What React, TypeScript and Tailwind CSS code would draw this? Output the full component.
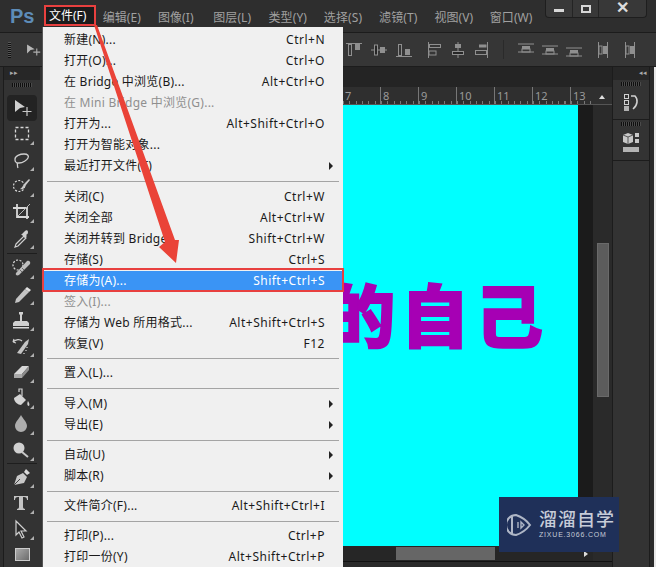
import React from 'react';

const menuBar = ['编辑(E)', '图像(I)', '图层(L)', '类型(Y)', '选择(S)', '滤镜(T)', '视图(V)', '窗口(W)'];

type MenuRow = { label?: string; keys?: string; disabled?: boolean; sub?: boolean; active?: boolean; sep?: number };

const menuRows: MenuRow[] = [
  { label: '新建(N)...', keys: 'Ctrl+N' },
  { label: '打开(O)...', keys: 'Ctrl+O' },
  { label: '在 Bridge 中浏览(B)...', keys: 'Alt+Ctrl+O' },
  { label: '在 Mini Bridge 中浏览(G)...', disabled: true },
  { label: '打开为...', keys: 'Alt+Shift+Ctrl+O' },
  { label: '打开为智能对象...' },
  { label: '最近打开文件(T)', sub: true },
  { sep: 10 },
  { label: '关闭(C)', keys: 'Ctrl+W' },
  { label: '关闭全部', keys: 'Alt+Ctrl+W' },
  { label: '关闭并转到 Bridge...', keys: 'Shift+Ctrl+W' },
  { label: '存储(S)', keys: 'Ctrl+S' },
  { label: '存储为(A)...', keys: 'Shift+Ctrl+S', active: true },
  { label: '签入(I)...', disabled: true },
  { label: '存储为 Web 所用格式...', keys: 'Alt+Shift+Ctrl+S' },
  { label: '恢复(V)', keys: 'F12' },
  { sep: 8 },
  { label: '置入(L)...' },
  { sep: 10 },
  { label: '导入(M)', sub: true },
  { label: '导出(E)', sub: true },
  { sep: 9 },
  { label: '自动(U)', sub: true },
  { label: '脚本(R)', sub: true },
  { sep: 9 },
  { label: '文件简介(F)...', keys: 'Alt+Shift+Ctrl+I' },
  { sep: 9 },
  { label: '打印(P)...', keys: 'Ctrl+P' },
  { label: '打印一份(Y)', keys: 'Alt+Shift+Ctrl+P' },
];

// each tool is drawn on a 26x26 box, corner triangle comes from Tool
const tools: { key: string; group?: string; active?: boolean; noCorner?: boolean; draw: React.ReactNode }[] = [
  {
    key: 'move',
    active: true,
    noCorner: true,
    draw: (
      <>
        <path d="M6 5l10 7-5 1-5 4z" fill="#d0d0d0" />
        <path d="M18 12v9M13.500 16.500h9" stroke="#c8c8c8" strokeWidth="1.2" fill="none" />
      </>
    ),
  },
  { key: 'marquee', draw: <rect x="6.500" y="6.500" width="13" height="12" fill="none" stroke="#d8d8d8" strokeWidth="1.3" strokeDasharray="3 2" /> },
  {
    key: 'lasso',
    draw: (
      <path d="M6 12c0-3 5-5 9-5s5 2 4 4-5 5-9 5-4-2-4-4zM8 16c1 2 0 3 1 5" fill="none" stroke="#d0d0d0" strokeWidth="1.3" />
    ),
  },
  {
    key: 'quick',
    draw: (
      <>
        <circle cx="10" cy="13" r="5.500" fill="none" stroke="#d8d8d8" strokeWidth="1.2" strokeDasharray="2 1.5" />
        <path d="M11 16c2-1 3-4 5-6l4-4 1 1-4 5c-1 3-3 5-6 4z" fill="#c8c8c8" />
      </>
    ),
  },
  {
    key: 'crop',
    draw: (
      <>
        <path d="M4 9h14v11M8 5v13h12" fill="none" stroke="#d8d8d8" strokeWidth="1.8" />
        <path d="M9 17L21 5" stroke="#b8b8b8" strokeWidth="1" />
      </>
    ),
  },
  {
    key: 'dropper',
    draw: (
      <>
        <path d="M7 19l8-8 2 2-8 8-3 1z" fill="none" stroke="#d0d0d0" strokeWidth="1.2" />
        <path d="M13 9l3-3c1-1 3-1 3 1s-1 2-2 3l1 1-2 2-4-4z" fill="#d0d0d0" />
      </>
    ),
  },
  {
    key: 'heal',
    group: 'my-[1.5px]',
    draw: (
      <>
        <circle cx="9" cy="10" r="5" fill="none" stroke="#d8d8d8" strokeWidth="1.2" strokeDasharray="2 1.5" />
        <path d="M7 18L18 6c2-1 4 1 3 3L10 20c-2 1-4 0-3-2z" fill="#bdbdbd" />
        <path d="M11 15l2 2M13 13l2 2" stroke="#6a6a6a" strokeWidth="1" />
      </>
    ),
  },
  {
    key: 'pencil',
    draw: (
      <>
        <path d="M7 18L16 8l4 3-10 10-4 1z" fill="#c4c4c4" />
        <path d="M16 8l2-2 4 3-2 2z" fill="#e0e0e0" />
      </>
    ),
  },
  {
    key: 'stamp',
    draw: (
      <>
        <path d="M10 5h4v2l-1 1v6h5l2 2v3H4v-3l2-2h5V8l-1-1z" fill="#d0d0d0" />
        <rect x="4" y="20" width="16" height="1.5" fill="#d8d8d8" />
      </>
    ),
  },
  {
    key: 'history',
    draw: (
      <>
        <path d="M8 20l8-11 4-3-1 5-7 10z" fill="#c4c4c4" />
        <path d="M4 9c3-3 7-3 9-1M4 9l1-3M4 9l3 1" fill="none" stroke="#d0d0d0" strokeWidth="1.2" />
        <path d="M18 14v1M17 17v1M15 20v1" stroke="#d8d8d8" strokeWidth="1.2" />
      </>
    ),
  },
  {
    key: 'eraser',
    draw: (
      <>
        <path d="M5 15l8-8h7l-7 8z" fill="#d8d8d8" />
        <path d="M5 15h8v4H5z" fill="#a8a8a8" />
        <path d="M13 15l7-8v4l-7 8z" fill="#8c8c8c" />
      </>
    ),
  },
  {
    key: 'bucket',
    draw: (
      <>
        <path d="M10 7V4h3v7" fill="none" stroke="#d0d0d0" strokeWidth="1.2" />
        <path d="M5 13l6-4 6 6-5 5c-3 0-7-3-7-7z" fill="#d4d4d4" />
        <path d="M19 16c1 2 2 3 1 5-2 0-2-3-1-5z" fill="#d4d4d4" />
      </>
    ),
  },
  { key: 'blur', draw: <path d="M12 4c2 4 6 7 6 11a6 6 0 01-12 0c0-4 4-7 6-11z" fill="#aeaeae" /> },
  {
    key: 'dodge',
    draw: (
      <>
        <circle cx="10" cy="11" r="5.500" fill="#d0d0d0" />
        <path d="M13 15l6 5" stroke="#c8c8c8" strokeWidth="2" />
      </>
    ),
  },
  {
    key: 'pen',
    group: '',
    draw: (
      <>
        <path d="M5 21l3-9 6-3 4 4-3 6z" fill="#c8c8c8" />
        <path d="M5 21l6-6" stroke="#444" strokeWidth="1" />
        <path d="M15 8l2-3 4 4-3 2z" fill="#dadada" />
      </>
    ),
  },
  {
    key: 'type',
    draw: <path d="M5 6h14v4h-1c0-2-1-3-3-3h-1v10c0 1 1 2 2 2v1H8v-1c1 0 2-1 2-2V7H9c-2 0-3 1-3 3H5z" fill="#c4c4c4" />,
  },
  { key: 'path', draw: <path d="M7 5v14l3-3 3 6 2-1-3-6h5z" fill="#2b2b2b" stroke="#d0d0d0" strokeWidth="1.2" /> },
];

const alignBars = ['top', 'mid', 'bottom', 'left', 'center', 'right'];

const AlignIcon = ({ bar }: { bar: string }) => (
  <svg width="18" height="18" viewBox="0 0 18 18" fill="none" stroke="#8f8f8f">
    {bar === 'top' && (
      <>
        <path d="M1 2.500h16" />
        <rect x="3.500" y="3.500" width="3" height="11" />
        <rect x="10" y="3" width="5" height="6" fill="#8f8f8f" stroke="none" />
      </>
    )}
    {bar === 'mid' && (
      <>
        <path d="M1 9h16" />
        <rect x="4.500" y="4" width="3" height="10" fill="#262626" />
        <rect x="10" y="6" width="5" height="6" fill="#8f8f8f" stroke="none" />
      </>
    )}
    {bar === 'bottom' && (
      <>
        <path d="M1 15.500h16" />
        <rect x="3.500" y="3.500" width="3" height="11" />
        <rect x="10" y="8" width="5" height="6" fill="#8f8f8f" stroke="none" />
      </>
    )}
    {bar === 'left' && (
      <>
        <path d="M2.500 1v16" />
        <rect x="3.500" y="3.500" width="11" height="3" />
        <rect x="3" y="10" width="7" height="4" fill="none" />
      </>
    )}
    {bar === 'center' && (
      <>
        <path d="M9 1v16" />
        <rect x="6" y="3" width="6" height="4" fill="#8f8f8f" stroke="none" />
        <rect x="3.500" y="10.500" width="11" height="3" fill="#262626" />
      </>
    )}
    {bar === 'right' && (
      <>
        <path d="M15.500 1v16" />
        <rect x="7" y="3.500" width="7.500" height="3" fill="#8f8f8f" stroke="none" />
        <rect x="3.500" y="9.500" width="11" height="4" />
      </>
    )}
  </svg>
);

const DistIcon = ({ y }: { y: number }) => (
  <svg width="18" height="18" viewBox="0 0 18 18" fill="none" stroke="#8f8f8f">
    <path d={`M1 ${y}h16M1 ${y + 8}h16`} />
    <rect x="5" y={y + 2} width="8" height="3" fill="#8f8f8f" stroke="none" />
    <rect x="5" y={y + 5} width="8" height="3" />
  </svg>
);

const VDistIcon = () => (
  <svg width="18" height="18" viewBox="0 0 18 18" fill="none" stroke="#8f8f8f">
    <path d="M4.500 1v16M13.500 1v16" />
    <rect x="5" y="5" width="3" height="8" />
    <rect x="9" y="5" width="4" height="8" fill="#8f8f8f" stroke="none" />
  </svg>
);

const Grip = ({ className }: { className?: string }) => (
  <div className={`h-[4px] bg-[repeating-linear-gradient(90deg,#0e0e0e_0_1px,#4a4a4a_1px_2px)] ${className ?? ''}`}></div>
);

const Tool = ({ active, noCorner, draw }: { active?: boolean; noCorner?: boolean; draw: React.ReactNode }) => (
  <div className={`relative flex justify-center items-center h-[26px] w-[30px] ${active ? 'bg-[#232323] rounded-sm' : ''}`}>
    <svg width="26" height="26" viewBox="0 0 26 26">
      {draw}
      {!noCorner && <path d="M25 20v4h-4z" fill="#b0b0b0" />}
    </svg>
  </div>
);

const Ruler = () => (
  <div className="flex justify-end h-[18px] shrink-0 bg-[#2f2f2f] border-b border-[#555] pr-[19px] text-[11px] leading-[13px] text-[#9a9a9a]">
    {[7, 8, 9, 10, 11, 12, 13].map((n) => (
      <div key={n} className={`relative border-l border-[#777] pl-[2px] pt-[2px] ${n === 13 ? 'w-[23px]' : 'w-[38px]'}`}>
        {n}
        <div className="absolute bottom-0 left-0 right-0 h-[3px] bg-[repeating-linear-gradient(90deg,#777_0_1px,transparent_1px_6.3px)]"></div>
      </div>
    ))}
  </div>
);

export default function App() {
  return (
    <div className="relative w-[656px] h-[567px] overflow-hidden flex flex-col bg-[#2e2e2e] font-['Noto_Sans','Noto_Sans_CJK_SC',sans-serif] text-[12px]">
      {/* title + menu bar */}
      <div className="flex h-[33px] shrink-0 bg-[#2e2e2e] border-b border-[#1c1c1c]">
        <div className="w-[43px] pl-[10px] pt-[2px] text-[20px] leading-[29px] font-bold text-[#5d8cb8] font-['Liberation_Sans',sans-serif]">Ps</div>
        <div className="w-[62px]"></div>
        <div className="flex pt-[10px] text-[#a0a0a0] leading-[16px]">
          {menuBar.map((m) => (
            <span key={m} className="w-[55.3px] tracking-[0.1px] whitespace-nowrap">{m}</span>
          ))}
        </div>
        <div className="ml-auto mr-[9px] flex h-[18px] rounded-b-[4px] border border-t-0 border-[#1e1e1e] bg-[#383838]">
          <div className="flex w-[27px] items-center justify-center border-r border-[#242424]">
            <div className="w-[10px] h-[3px] mt-[3px] bg-[#d8d8d8]"></div>
          </div>
          <div className="flex w-[26px] items-center justify-center border-r border-[#242424]">
            <div className="w-[10px] h-[8px] border-2 border-[#d8d8d8]"></div>
          </div>
          <div className="flex w-[47px] items-center justify-center pb-[2px] text-[16px] leading-none font-bold text-[#dcdcdc] font-['Liberation_Sans',sans-serif]">✕</div>
        </div>
      </div>

      {/* options bar */}
      <div className="flex items-center h-[34px] shrink-0 bg-[#363636] border-b border-[#1c1c1c]">
        <div className="w-[3px] h-[16px] ml-[8px] bg-[repeating-linear-gradient(0deg,#111_0_1px,#555_1px_2px)]"></div>
        <svg className="ml-[14px]" width="18" height="18" viewBox="0 0 26 26">
          <path d="M3 5l11 7-6 1-5 5z" fill="#b8b8b8" />
          <path d="M17 11v10M12 16h10" stroke="#b0b0b0" strokeWidth="1.6" fill="none" />
        </svg>
        <div className="flex ml-[302px] gap-[7px]">
          {alignBars.slice(0, 3).map((b) => (
            <AlignIcon key={b} bar={b} />
          ))}
        </div>
        <div className="flex ml-[13px] gap-[5px]">
          {alignBars.slice(3).map((b) => (
            <AlignIcon key={b} bar={b} />
          ))}
        </div>
        <div className="w-px h-[19px] mx-[13px] bg-[#2a2a2a]"></div>
        <div className="flex gap-[6px]">
          <DistIcon y={3} />
          <DistIcon y={5} />
          <DistIcon y={7} />
        </div>
        <div className="flex ml-[11px] gap-[9px]">
          <VDistIcon />
          <VDistIcon />
        </div>
      </div>

      <div className="flex flex-1 min-h-0">
        {/* tool column */}
        <div className="w-[40px] shrink-0 ml-[3px] flex flex-col items-center border-x border-[#1c1c1c] bg-[#333333] pr-[2px]">
          <div className="w-full h-[13px] pl-[6px] text-[7px] leading-[12px] text-[#aaa] bg-[#272727]">▸▸</div>
          <Grip className="w-[20px] mt-[3px]" />
          <div className="mt-[8px] flex flex-col items-center">
            {tools.map((t) => (
              <React.Fragment key={t.key}>
                {t.group !== undefined && <div className={`w-[30px] h-px bg-[#1e1e1e] ${t.group}`}></div>}
                <Tool active={t.active} noCorner={t.noCorner} draw={t.draw} />
              </React.Fragment>
            ))}
            <div className="mt-[6px] w-[15px] h-[13px] bg-[linear-gradient(135deg,#aaa,#6c6c6c)] border border-[#ccc]"></div>
          </div>
        </div>

        {/* document area */}
        <div className="flex-1 min-w-0 flex flex-col">
          <div className="h-[20px] shrink-0 bg-[#242424]"></div>
          <Ruler />
          <div className="flex flex-1 min-h-0 bg-[#1c1c1c]">
            <div className="flex-1 min-w-0 flex flex-col">
              <div className="flex flex-1 min-h-0">
                <div className="flex-1 min-w-0 bg-[#00ffff] flex justify-end pt-[168px] pr-[29px]">
                  <div className="text-[68px] leading-[80px] font-black tracking-[6px] text-[#a600b4] [-webkit-text-stroke:2px_#a600b4] font-['Noto_Sans_CJK_SC',sans-serif] whitespace-nowrap">的自己</div>
                </div>
                <div className="w-[15px] bg-[#1b1b1b]"></div>
              </div>
              <div className="relative h-[15px] shrink-0 flex bg-[#262626] pl-[353px]">
                <div className="w-[99px] h-[13px] mt-px bg-[#666666]"></div>
                <div className="absolute left-[541px] top-[5px] w-0 h-0 border-y-[3px] border-l-[4px] border-y-transparent border-l-[#ddd]"></div>
              </div>
            </div>
            <div className="relative w-[19px] shrink-0 flex flex-col items-center bg-[#2a2a2a]">
              <div className="absolute top-[-10px] left-[6px] w-0 h-0 border-x-[3px] border-b-[4px] border-x-transparent border-b-[#ddd]"></div>
              <div className="mt-[138px] w-[12px] h-[154px] bg-[#5c5c5c] border border-[#6a6a6a]"></div>
            </div>
          </div>
          <div className="h-[6px] shrink-0 bg-[#2a2a2a] border-t border-[#111]"></div>
        </div>

        {/* right dock */}
        <div className="w-[38px] shrink-0 flex flex-col border-x border-[#1c1c1c] bg-[#333333]">
          <div className="h-[13px] shrink-0 text-right pr-[2px] text-[7px] leading-[12px] text-[#aaa] bg-[#272727]">◂◂</div>
          <div className="h-[40px] shrink-0 border-b border-[#1c1c1c] flex flex-col items-center pt-[2px]">
            <Grip className="w-[20px]" />
            <svg className="mt-[7px]" width="18" height="20" viewBox="0 0 18 20" fill="none" stroke="#d0d0d0">
              <rect x="2.500" y="1.500" width="4" height="4" />
              <rect x="2.500" y="7.500" width="4" height="4" />
              <rect x="2" y="13" width="5" height="5" fill="#b0b0b0" stroke="none" />
              <path d="M9 3h4c3 3 3 9-2 13" strokeWidth="1.6" />
            </svg>
          </div>
          <div className="h-[41px] shrink-0 border-b border-[#1c1c1c] flex flex-col items-center pt-[2px]">
            <Grip className="w-[20px]" />
            <svg className="mt-[6px]" width="18" height="22" viewBox="0 0 18 22">
              <path d="M6 1l5 2v7l-5 2-5-2V3z" fill="#c8c8c8" />
              <path d="M1 3l5 2 5-2M6 5v7" stroke="#555" fill="none" />
              <rect x="13" y="1" width="4" height="4" fill="#c8c8c8" />
              <rect x="13" y="7" width="4" height="4" fill="#c8c8c8" />
              <rect x="1" y="15" width="16" height="5" fill="#b4b4b4" />
            </svg>
          </div>
        </div>
        <div className="w-[6px] shrink-0 bg-[#e8e8e8] border-l-[4px] border-[#2a2a2a]"></div>
      </div>

      {/* file menu */}
      <div className="absolute left-[42px] top-[27px] w-[301px] h-[540px] bg-[#f0f0f0] pt-[2.5px] text-[#1a1a1a] border-l border-[#555]">
        {menuRows.map((r, i) =>
          r.sep ? (
            <div key={i} className="flex items-center px-[4px]" style={{ height: r.sep }}>
              <div className="w-full h-px bg-[#a4a4a4]"></div>
            </div>
          ) : (
            <div
              key={i}
              className={`relative flex items-center justify-between h-[21px] pl-[21px] pr-[18px] whitespace-nowrap ${r.active ? 'bg-[#3a94f5] text-white' : ''} ${r.disabled ? 'text-[#8f8f8f]' : ''}`}
            >
              <span className="tracking-[0.25px]">{r.label}</span>
              {r.keys && <span className="tracking-[0.5px]">{r.keys}</span>}
              {r.sub && <span className="absolute right-[10px] w-0 h-0 border-y-[4px] border-l-[4px] border-y-transparent border-l-[#222]"></span>}
            </div>
          )
        )}
      </div>

      {/* annotations */}
      <div className="absolute left-[44px] top-[5px] w-[52px] h-[21px] border-[2px] border-[#e8403f] text-white text-[12px] leading-[17px] pl-[3px] whitespace-nowrap bg-[#1c1c1c]">文件(F)</div>
      <div className="absolute left-[42px] top-[268px] w-[302px] h-[24px] border-[2px] border-[#e8403f]"></div>
      <svg className="absolute left-0 top-0 pointer-events-none" width="656" height="567" viewBox="0 0 656 567">
        <path d="M94 25h3l78 215 4 0-3 23-17-16 6-5z" fill="#ea4338" />
      </svg>

      {/* watermark */}
      <div className="absolute left-[499px] top-[497px] w-[120px] h-[55px] flex items-center gap-[7px] pl-[8px] bg-[#1f3059] text-[#c6ccd8]">
        <svg width="25" height="26" viewBox="0 0 25 26" fill="none" stroke="#aeb6c6" strokeWidth="2">
          <path d="M5 3v20M9 3c6 2 11 6 14 10-3 4-8 8-14 10a8 8 0 010-20z" />
          <path d="M11 10v6M14 10l3 3-3 3z" strokeWidth="1.4" />
        </svg>
        <div className="flex flex-col">
          <div className="text-[18px] leading-[21px] tracking-[1px] font-medium whitespace-nowrap">溜溜自学</div>
          <div className="text-[7px] leading-[10px] tracking-[0.8px] font-['Liberation_Sans',sans-serif] whitespace-nowrap">ZIXUE.3066.COM</div>
        </div>
      </div>
    </div>
  );
}
